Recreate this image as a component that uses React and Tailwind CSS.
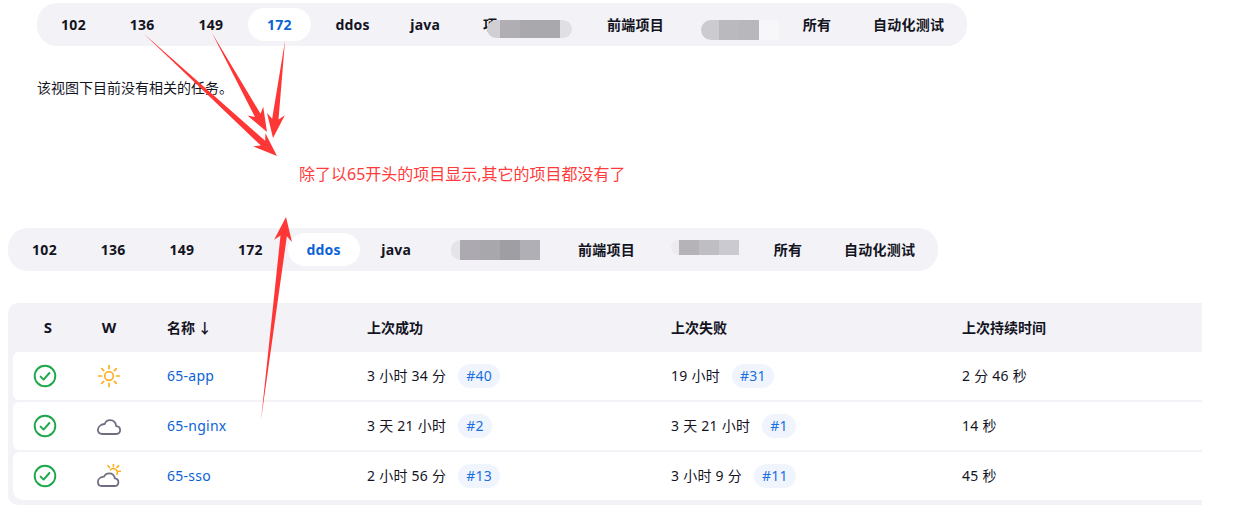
const font = { fontFamily: '"Noto Sans", "Noto Sans CJK SC", sans-serif' };

function Tab({ children, active, className = '' }) {
  return (
    <div className={`relative h-[33px] rounded-[17px] flex items-center justify-center whitespace-nowrap text-sm font-bold tracking-[0.25px] ${active ? 'bg-white text-[#0b63d6]' : 'text-[#14141f]'} ${className}`}>
      {children}
    </div>
  );
}

function Mosaic({ className, cap, capClass, blocks, tail, tailClass }) {
  return (
    <div className={`absolute flex ${className}`}>
      <div className={capClass} style={{ background: cap }} />
      {blocks.map((c, i) => (
        <div key={i} className="w-5" style={{ background: c }} />
      ))}
      {tail && <div className={tailClass} style={{ background: tail }} />}
    </div>
  );
}

function TabBar({ active, className, blurA, blurB }) {
  return (
    <div className={`w-[930px] h-[43px] px-[5px] bg-[#f2f2f7] rounded-[20px] flex items-center gap-[5.67px] ${className}`}>
      <Tab className="w-[63px]" active={active === '102'}>102</Tab>
      <Tab className="w-[63px]">136</Tab>
      <Tab className="w-[63px]">149</Tab>
      <Tab className="w-[63px]" active={active === '172'}>172</Tab>
      <Tab className="w-[72px]" active={active === 'ddos'}>ddos</Tab>
      <Tab className="w-[62px]">java</Tab>
      <Tab className="w-[121px] !justify-start pl-[21px]">{blurA}</Tab>
      <Tab className="w-[94px]">前端项目</Tab>
      <Tab className="w-[90px] !justify-start">{blurB}</Tab>
      <Tab className="w-[66px]">所有</Tab>
      <Tab className="w-[106px]">自动化测试</Tab>
    </div>
  );
}

function Arrow({ x1, y1, x2, y2 }) {
  const len = Math.hypot(x2 - x1, y2 - y1);
  const ux = (x2 - x1) / len;
  const uy = (y2 - y1) / len;
  const at = (along, side) => `${x1 + ux * along - uy * side},${y1 + uy * along + ux * side}`;
  const pts = [
    at(0, 0),
    at(len - 19, 3.2),
    at(len - 24, 9),
    at(len, 0),
    at(len - 24, -9),
    at(len - 19, -3.2),
  ].join(' ');
  return <polygon points={pts} fill="#ff3636" />;
}

function StatusIcon() {
  return (
    <svg className="mr-1.5" width="24" height="24" viewBox="0 0 24 24" fill="none" stroke="#1ea64a" strokeWidth="1.9" strokeLinecap="round" strokeLinejoin="round">
      <circle cx="12" cy="12" r="10.3" />
      <path d="M7.6 12.600l3 3 5.800-6.600" />
    </svg>
  );
}

function Sun() {
  return (
    <svg width="24" height="24" viewBox="0 0 24 24" fill="none" stroke="#fdb022" strokeWidth="1.7" strokeLinecap="round">
      <circle cx="12" cy="12" r="4.300" />
      <path d="M12 1.600v3M12 19.400v3M1.600 12h3M19.400 12h3M4.700 4.700l2 2M17.300 17.300l2 2M4.700 19.300l2-2M17.300 6.700l2-2" />
    </svg>
  );
}

function Cloud() {
  return (
    <svg width="24" height="24" viewBox="0 0 24 24" fill="none" stroke="#6f6d82" strokeWidth="1.8" strokeLinejoin="round">
      <path d="M5.300 20h13.900c2.300 0 3.900-1.700 3.900-3.900 0-2.200-1.700-3.900-3.900-4-.5-3.500-3-5.900-6.100-5.900-2.600 0-4.500 1.500-5.400 3.800-3 .3-6.800 2.100-6.800 5.800 0 2.500 1.800 4.200 4.400 4.200z" />
    </svg>
  );
}

function PartlySunny() {
  return (
    <svg width="24" height="24" viewBox="0 0 24 24" fill="none" strokeWidth="1.6" strokeLinecap="round" strokeLinejoin="round">
      <g stroke="#fdb022">
        <path d="M13.500 5.800a4 4 0 0 1 6.400 4.600" />
        <path d="M16.400 0v2.600M23.800 7.300h-2.400M11 1.700l1.500 1.700M21.700 1.700l-1.700 1.700" />
      </g>
      <path stroke="#6f6d82" strokeWidth="1.800" d="M4.600 22h12.700c2.500 0 4.100-1.600 4.100-3.800 0-2.200-1.500-3.700-3.500-3.900-.6-2.900-2.900-5-5.700-5-2.500 0-4.300 1.300-5.200 3.400-3 .2-6.100 1.900-6.100 5 0 2.700 1.600 4.300 3.700 4.300z" />
    </svg>
  );
}

function Run({ time, build }) {
  return (
    <div className="pl-8 flex items-center gap-3 whitespace-nowrap">
      <span>{time}</span>
      <span className="h-6 px-2 rounded-full bg-[#f0f5fd] text-[#1a6fe0] flex items-center">{build}</span>
    </div>
  );
}

const rows = [
  { name: '65-app', weather: <Sun />, ok: ['3 小时 34 分', '#40'], bad: ['19 小时', '#31'], took: '2 分 46 秒' },
  { name: '65-nginx', weather: <Cloud />, ok: ['3 天 21 小时', '#2'], bad: ['3 天 21 小时', '#1'], took: '14 秒' },
  { name: '65-sso', weather: <PartlySunny />, ok: ['2 小时 56 分', '#13'], bad: ['3 小时 9 分', '#11'], took: '45 秒' },
];

const cols = 'grid grid-cols-[70px_52px_200px_304px_291px_1fr] items-center';

export default function App() {
  return (
    <div className="relative w-[1251px] h-[522px] overflow-hidden bg-white text-sm text-[#14141f]" style={font}>
      <div className="pt-[3px]">
        <TabBar
          active="172"
          className="ml-[37px]"
          blurA={
            <>
              <span>项</span>
              <Mosaic
                className="left-[25px] top-[12px] h-[18px]"
                cap="#d0d0d4"
                capClass="w-[13px] rounded-l-[9px]"
                blocks={['#b0aeb3', '#a9a8ac', '#a9a8ac']}
                tail="#e0e0e4"
                tailClass="w-[12px] rounded-r-[9px]"
              />
            </>
          }
          blurB={
            <Mosaic
              className="left-[13px] top-[12px] h-5"
              cap="#ccccd0"
              capClass="w-[18px] rounded-l-[10px]"
              blocks={['#bab9bd', '#b8b7bb']}
              tail="#f7f7fa"
              tailClass="w-5"
            />
          }
        />
      </div>

      <p className="ml-[37px] mt-8 leading-5">该视图下目前没有相关的任务。</p>
      <p className="ml-[299px] mt-[66px] leading-5 text-base text-[#ff3b3b]">除了以65开头的项目显示,其它的项目都没有了</p>

      <TabBar
        active="ddos"
        className="ml-2 mt-[44px]"
        blurA={
          <Mosaic
            className="left-[18px] top-[7px] h-5"
            cap="#e4e4e9"
            capClass="w-[9px] rounded-l-[10px]"
            blocks={['#acaab0', '#a8a7ab', '#9f9ea2', '#b0afb5']}
          />
        }
        blurB={
          <Mosaic
            className="left-[12px] top-[7px] h-[15px]"
            cap="#ebebf0"
            capClass="w-2 rounded-l-[8px]"
            blocks={['#b5b3b8', '#bfbec3', '#cbcad0']}
          />
        }
      />

      <div className="ml-2 mt-8 w-[1194px] bg-[#f2f2f7] rounded-l-[10px] pl-[5px] pb-[5px] overflow-hidden">
        <div className={`${cols} h-[49px] font-bold`}>
          <div className="text-center text-[15px]">S</div>
          <div className="text-center text-[15px]">W</div>
          <div className="pl-8">名称 <span className="-ml-px">↓</span></div>
          <div className="pl-8">上次成功</div>
          <div className="pl-8">上次失败</div>
          <div className="pl-8">上次持续时间</div>
        </div>
        <div className="flex flex-col gap-0.5 tracking-[0.25px]">
          {rows.map((r, i) => (
            <div key={r.name} className={`${cols} h-12 bg-white rounded-l-md ${i === 2 ? 'rounded-bl-[10px]' : ''}`}>
              <div className="flex justify-center"><StatusIcon /></div>
              <div className="flex justify-center">{r.weather}</div>
              <div className="pl-8 text-[#0b63d6]">{r.name}</div>
              <Run time={r.ok[0]} build={r.ok[1]} />
              <Run time={r.bad[0]} build={r.bad[1]} />
              <div className="pl-8">{r.took}</div>
            </div>
          ))}
        </div>
      </div>

      <svg className="absolute inset-0 pointer-events-none" width="1251" height="522">
        <Arrow x1={143} y1={33} x2={277} y2={156} />
        <Arrow x1={212} y1={33} x2={267} y2={132} />
        <Arrow x1={285} y1={41} x2={273} y2={138} />
        <Arrow x1={261} y1={420} x2={286} y2={217} />
      </svg>
    </div>
  );
}
